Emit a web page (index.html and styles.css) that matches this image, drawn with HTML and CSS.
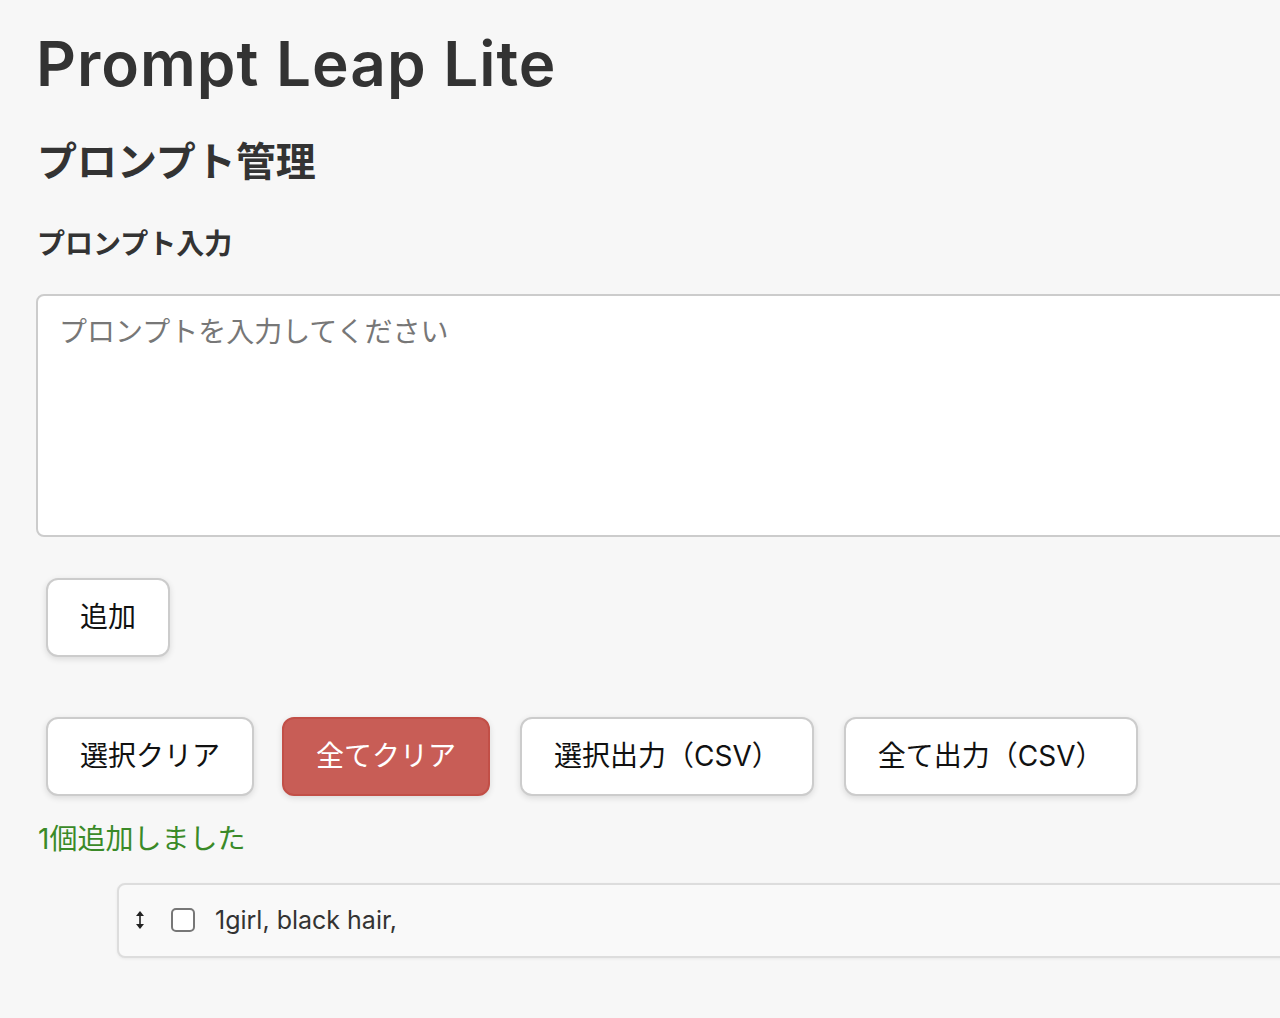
FILE: index.html
```html
<!DOCTYPE html>
<html lang="ja">
<head>
  <meta charset="UTF-8">
  <title>Prompt Leap Lite</title>
  <link rel="stylesheet" href="styles.css">
</head>
<body>
  <div id="app">
    <h1 class="app-title">Prompt Leap Lite</h1>
    <h2 class="section-title">プロンプト管理</h2>

    <!-- 入力エリア -->
    <label class="input-label" for="prompt-input">プロンプト入力</label>
    <textarea id="prompt-input" class="prompt-input" placeholder="プロンプトを入力してください"></textarea>
    <div class="add-row">
      <button type="button" class="btn">追加</button>
    </div>

    <!-- 操作ボタン -->
    <div class="action-row">
      <button type="button" class="btn">選択クリア</button>
      <button type="button" class="btn btn-danger">全てクリア</button>
      <button type="button" class="btn">選択出力（CSV）</button>
      <button type="button" class="btn">全て出力（CSV）</button>
    </div>
    <p class="status">1個追加しました</p>

    <!-- プロンプト一覧 -->
    <ul class="prompt-list">
      <li class="prompt-item">
        <span class="drag-handle">
          <svg width="10" height="18" viewBox="0 0 10 18" fill="#222">
            <rect x="4.2" y="3" width="1.6" height="12"/>
            <path d="M5 0 L9 5 L1 5 Z"/>
            <path d="M5 18 L9 13 L1 13 Z"/>
          </svg>
        </span>
        <input type="checkbox" class="prompt-check">
        <span class="prompt-text">1girl, black hair,</span>
      </li>
    </ul>
  </div>
</body>
</html>
```

FILE: styles.css
```css
html, body {
  margin: 0;
  overflow: hidden;
}
body {
  background-color: #f7f7f7;
  color: #333;
  font-family: Inter, "Noto Sans CJK JP", sans-serif;
}
#app {
  width: 1400px;
  padding: 27px 36px;
}
.app-title {
  font-size: 62px;
  font-weight: 600;
  letter-spacing: 1px;
  line-height: 1.2;
  margin: 0;
}
.section-title {
  font-size: 40px;
  font-weight: 700;
  line-height: 1.3;
  margin: 35px 0 0 1px;
}
.input-label {
  display: block;
  font-size: 28px;
  font-weight: 700;
  margin: 38px 0 0 1px;
  line-height: 1.3;
}
.prompt-input {
  display: block;
  box-sizing: border-box;
  width: 100%;
  height: 243px;
  margin-top: 31px;
  padding: 14px 21px;
  border: 2px solid #ccc;
  border-radius: 8px;
  background: #fff;
  font-family: inherit;
  font-size: 28px;
  resize: none;
}
.prompt-input::placeholder {
  color: #777;
}
/* ボタン */
.btn {
  font-family: inherit;
  font-size: 28px;
  line-height: 39px;
  padding: 18px 32px;
  border: 2px solid #ccc;
  border-radius: 12px;
  background-color: #fff;
  color: #111;
  box-shadow: 0 2px 6px rgba(0,0,0,0.12);
  cursor: pointer;
}
.btn-danger {
  background-color: #c85d56;
  border-color: #c24f47;
  color: #fff;
}
.add-row {
  margin: 41px 0 0 10px;
}
.action-row {
  display: flex;
  gap: 30px;
  margin: 60px 0 0 10px;
}
.action-row .btn:first-child {
  margin-right: -2px;
}
.status {
  color: #3a8a28;
  font-size: 28px;
  margin: 21px 0 0 2px;
}
.prompt-list {
  list-style: none;
  margin: 26px 0 0 81px;
  padding: 0;
}
.prompt-item {
  display: flex;
  align-items: center;
  height: 71px;
  padding: 0 16px;
  border: 2px solid #ddd;
  border-radius: 8px;
  background-color: #f9f9f9;
  box-shadow: 0 1px 3px rgba(0,0,0,0.06);
}
.drag-handle {
  display: flex;
  width: 10px;
  margin-right: 26px;
}
.prompt-check {
  appearance: none;
  width: 24px;
  height: 24px;
  margin: 0 20px 0 0;
  border: 2px solid #777;
  border-radius: 5px;
  background: #fff;
}
.prompt-text {
  font-size: 25px;
  color: #333;
}
```
